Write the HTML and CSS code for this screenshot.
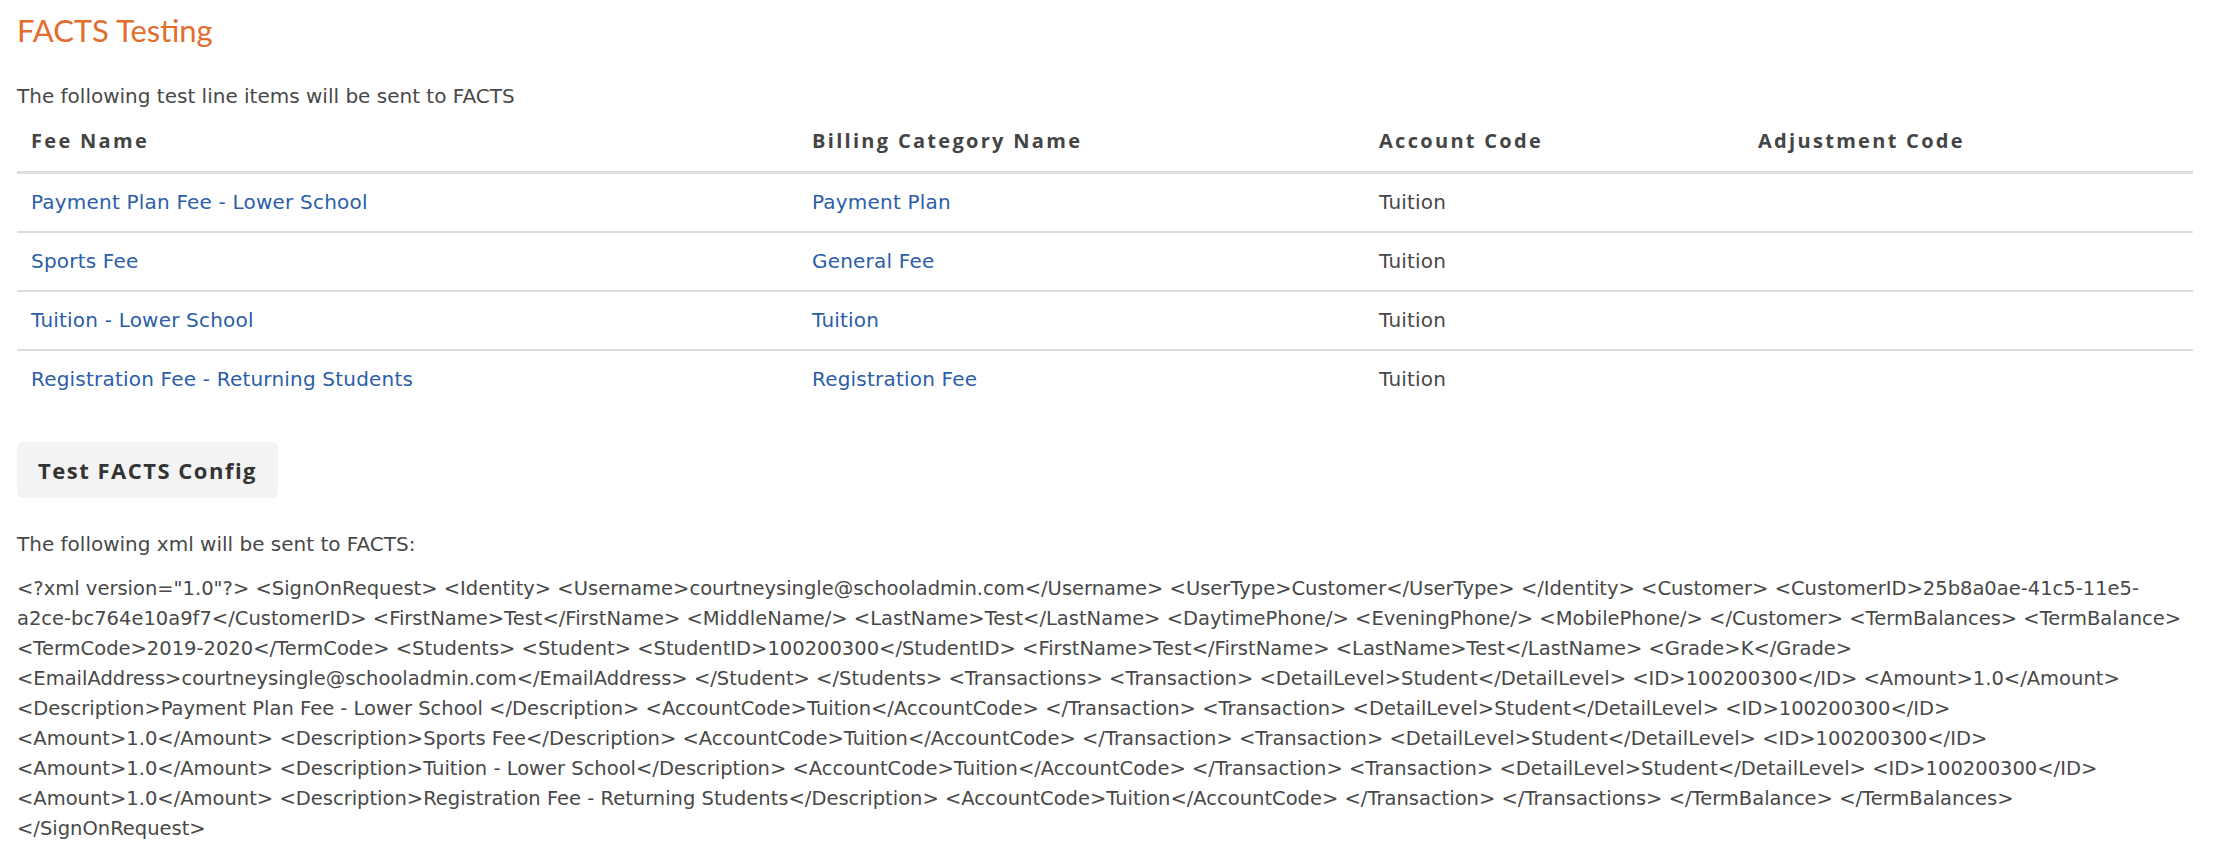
FILE: index.html
```html
<!DOCTYPE html>
<html>
<head>
<meta charset="utf-8">
<link rel="stylesheet" href="styles.css">
</head>
<body>
<main class="page">
  <h1 class="title">FACTS Testing</h1>
  <p class="intro">The following test line items will be sent to FACTS</p>
  <table class="fees">
    <colgroup>
      <col class="c1"><col class="c2"><col class="c3"><col class="c4">
    </colgroup>
    <thead>
      <tr><th>Fee Name</th><th>Billing Category Name</th><th>Account Code</th><th>Adjustment Code</th></tr>
    </thead>
    <tbody>
      <tr><td><a href="#">Payment Plan Fee - Lower School</a></td><td><a href="#">Payment Plan</a></td><td>Tuition</td><td></td></tr>
      <tr><td><a href="#">Sports Fee</a></td><td><a href="#">General Fee</a></td><td>Tuition</td><td></td></tr>
      <tr><td><a href="#">Tuition - Lower School</a></td><td><a href="#">Tuition</a></td><td>Tuition</td><td></td></tr>
      <tr><td><a href="#">Registration Fee - Returning Students</a></td><td><a href="#">Registration Fee</a></td><td>Tuition</td><td></td></tr>
    </tbody>
  </table>
  <button class="btn" type="button">Test FACTS Config</button>
  <p class="intro xml-intro">The following xml will be sent to FACTS:</p>
  <p class="xml">&lt;?xml version="1.0"?&gt; &lt;SignOnRequest&gt; &lt;Identity&gt; &lt;Username&gt;courtneysingle@schooladmin.com&lt;/Username&gt; &lt;UserType&gt;Customer&lt;/UserType&gt; &lt;/Identity&gt; &lt;Customer&gt; &lt;CustomerID&gt;25b8a0ae-41c5-11e5-<br>a2ce-bc764e10a9f7&lt;/CustomerID&gt; &lt;FirstName&gt;Test&lt;/FirstName&gt; &lt;MiddleName/&gt; &lt;LastName&gt;Test&lt;/LastName&gt; &lt;DaytimePhone/&gt; &lt;EveningPhone/&gt; &lt;MobilePhone/&gt; &lt;/Customer&gt; &lt;TermBalances&gt; &lt;TermBalance&gt;<br>&lt;TermCode&gt;2019-2020&lt;/TermCode&gt; &lt;Students&gt; &lt;Student&gt; &lt;StudentID&gt;100200300&lt;/StudentID&gt; &lt;FirstName&gt;Test&lt;/FirstName&gt; &lt;LastName&gt;Test&lt;/LastName&gt; &lt;Grade&gt;K&lt;/Grade&gt;<br>&lt;EmailAddress&gt;courtneysingle@schooladmin.com&lt;/EmailAddress&gt; &lt;/Student&gt; &lt;/Students&gt; &lt;Transactions&gt; &lt;Transaction&gt; &lt;DetailLevel&gt;Student&lt;/DetailLevel&gt; &lt;ID&gt;100200300&lt;/ID&gt; &lt;Amount&gt;1.0&lt;/Amount&gt;<br>&lt;Description&gt;Payment Plan Fee - Lower School &lt;/Description&gt; &lt;AccountCode&gt;Tuition&lt;/AccountCode&gt; &lt;/Transaction&gt; &lt;Transaction&gt; &lt;DetailLevel&gt;Student&lt;/DetailLevel&gt; &lt;ID&gt;100200300&lt;/ID&gt;<br>&lt;Amount&gt;1.0&lt;/Amount&gt; &lt;Description&gt;Sports Fee&lt;/Description&gt; &lt;AccountCode&gt;Tuition&lt;/AccountCode&gt; &lt;/Transaction&gt; &lt;Transaction&gt; &lt;DetailLevel&gt;Student&lt;/DetailLevel&gt; &lt;ID&gt;100200300&lt;/ID&gt;<br>&lt;Amount&gt;1.0&lt;/Amount&gt; &lt;Description&gt;Tuition - Lower School&lt;/Description&gt; &lt;AccountCode&gt;Tuition&lt;/AccountCode&gt; &lt;/Transaction&gt; &lt;Transaction&gt; &lt;DetailLevel&gt;Student&lt;/DetailLevel&gt; &lt;ID&gt;100200300&lt;/ID&gt;<br>&lt;Amount&gt;1.0&lt;/Amount&gt; &lt;Description&gt;Registration Fee - Returning Students&lt;/Description&gt; &lt;AccountCode&gt;Tuition&lt;/AccountCode&gt; &lt;/Transaction&gt; &lt;/Transactions&gt; &lt;/TermBalance&gt; &lt;/TermBalances&gt;<br>&lt;/SignOnRequest&gt;</p>
</main>
</body>
</html>
```

FILE: styles.css
```css
html, body {
  margin: 0;
  padding: 0;
  background: #ffffff;
}

.page {
  padding: 10px 37px 0 17px;
  font-family: "DejaVu Sans", "Open Sans", sans-serif;
  color: #484848;
}

.title {
  margin: 0;
  font-family: Lato, "Open Sans", sans-serif;
  font-size: 31px;
  line-height: 40px;
  font-weight: 400;
  color: #e26d2d;
}

.intro {
  margin: 34px 0 0 0;
  font-size: 20px;
  line-height: 24px;
}

.fees {
  width: 100%;
  border-collapse: collapse;
  margin-top: 5px;
  font-size: 20px;
}

.fees .c1 { width: 781px; }
.fees .c2 { width: 567px; }
.fees .c3 { width: 379px; }
.fees .c4 { width: auto; }

.fees th {
  text-align: left;
  font-family: "Open Sans", sans-serif;
  font-weight: 700;
  letter-spacing: 2.3px;
  color: #444;
  padding: 16px 14px 18px 14px;
  line-height: 24px;
  border-bottom: 3px solid #dddddd;
}

.fees td {
  padding: 16px 14px 17px 14px;
  line-height: 24px;
  letter-spacing: 0.2px;
  border-bottom: 2px solid #dddddd;
  color: #484848;
}

.fees tbody tr:last-child td {
  border-bottom: none;
}

.fees a {
  color: #2b5ea7;
  text-decoration: none;
}

.btn {
  display: block;
  margin-top: 34px;
  padding: 0 21px;
  height: 56px;
  border: none;
  border-radius: 6px;
  background: #f3f3f3;
  font-family: "Open Sans", sans-serif;
  font-size: 22px;
  font-weight: 700;
  letter-spacing: 1.5px;
  color: #333;
}

.xml-intro {
  margin-top: 34px;
}

.xml {
  margin: 18px 0 0 0;
  font-size: 19.5px;
  line-height: 30px;
  white-space: nowrap;
}
```
